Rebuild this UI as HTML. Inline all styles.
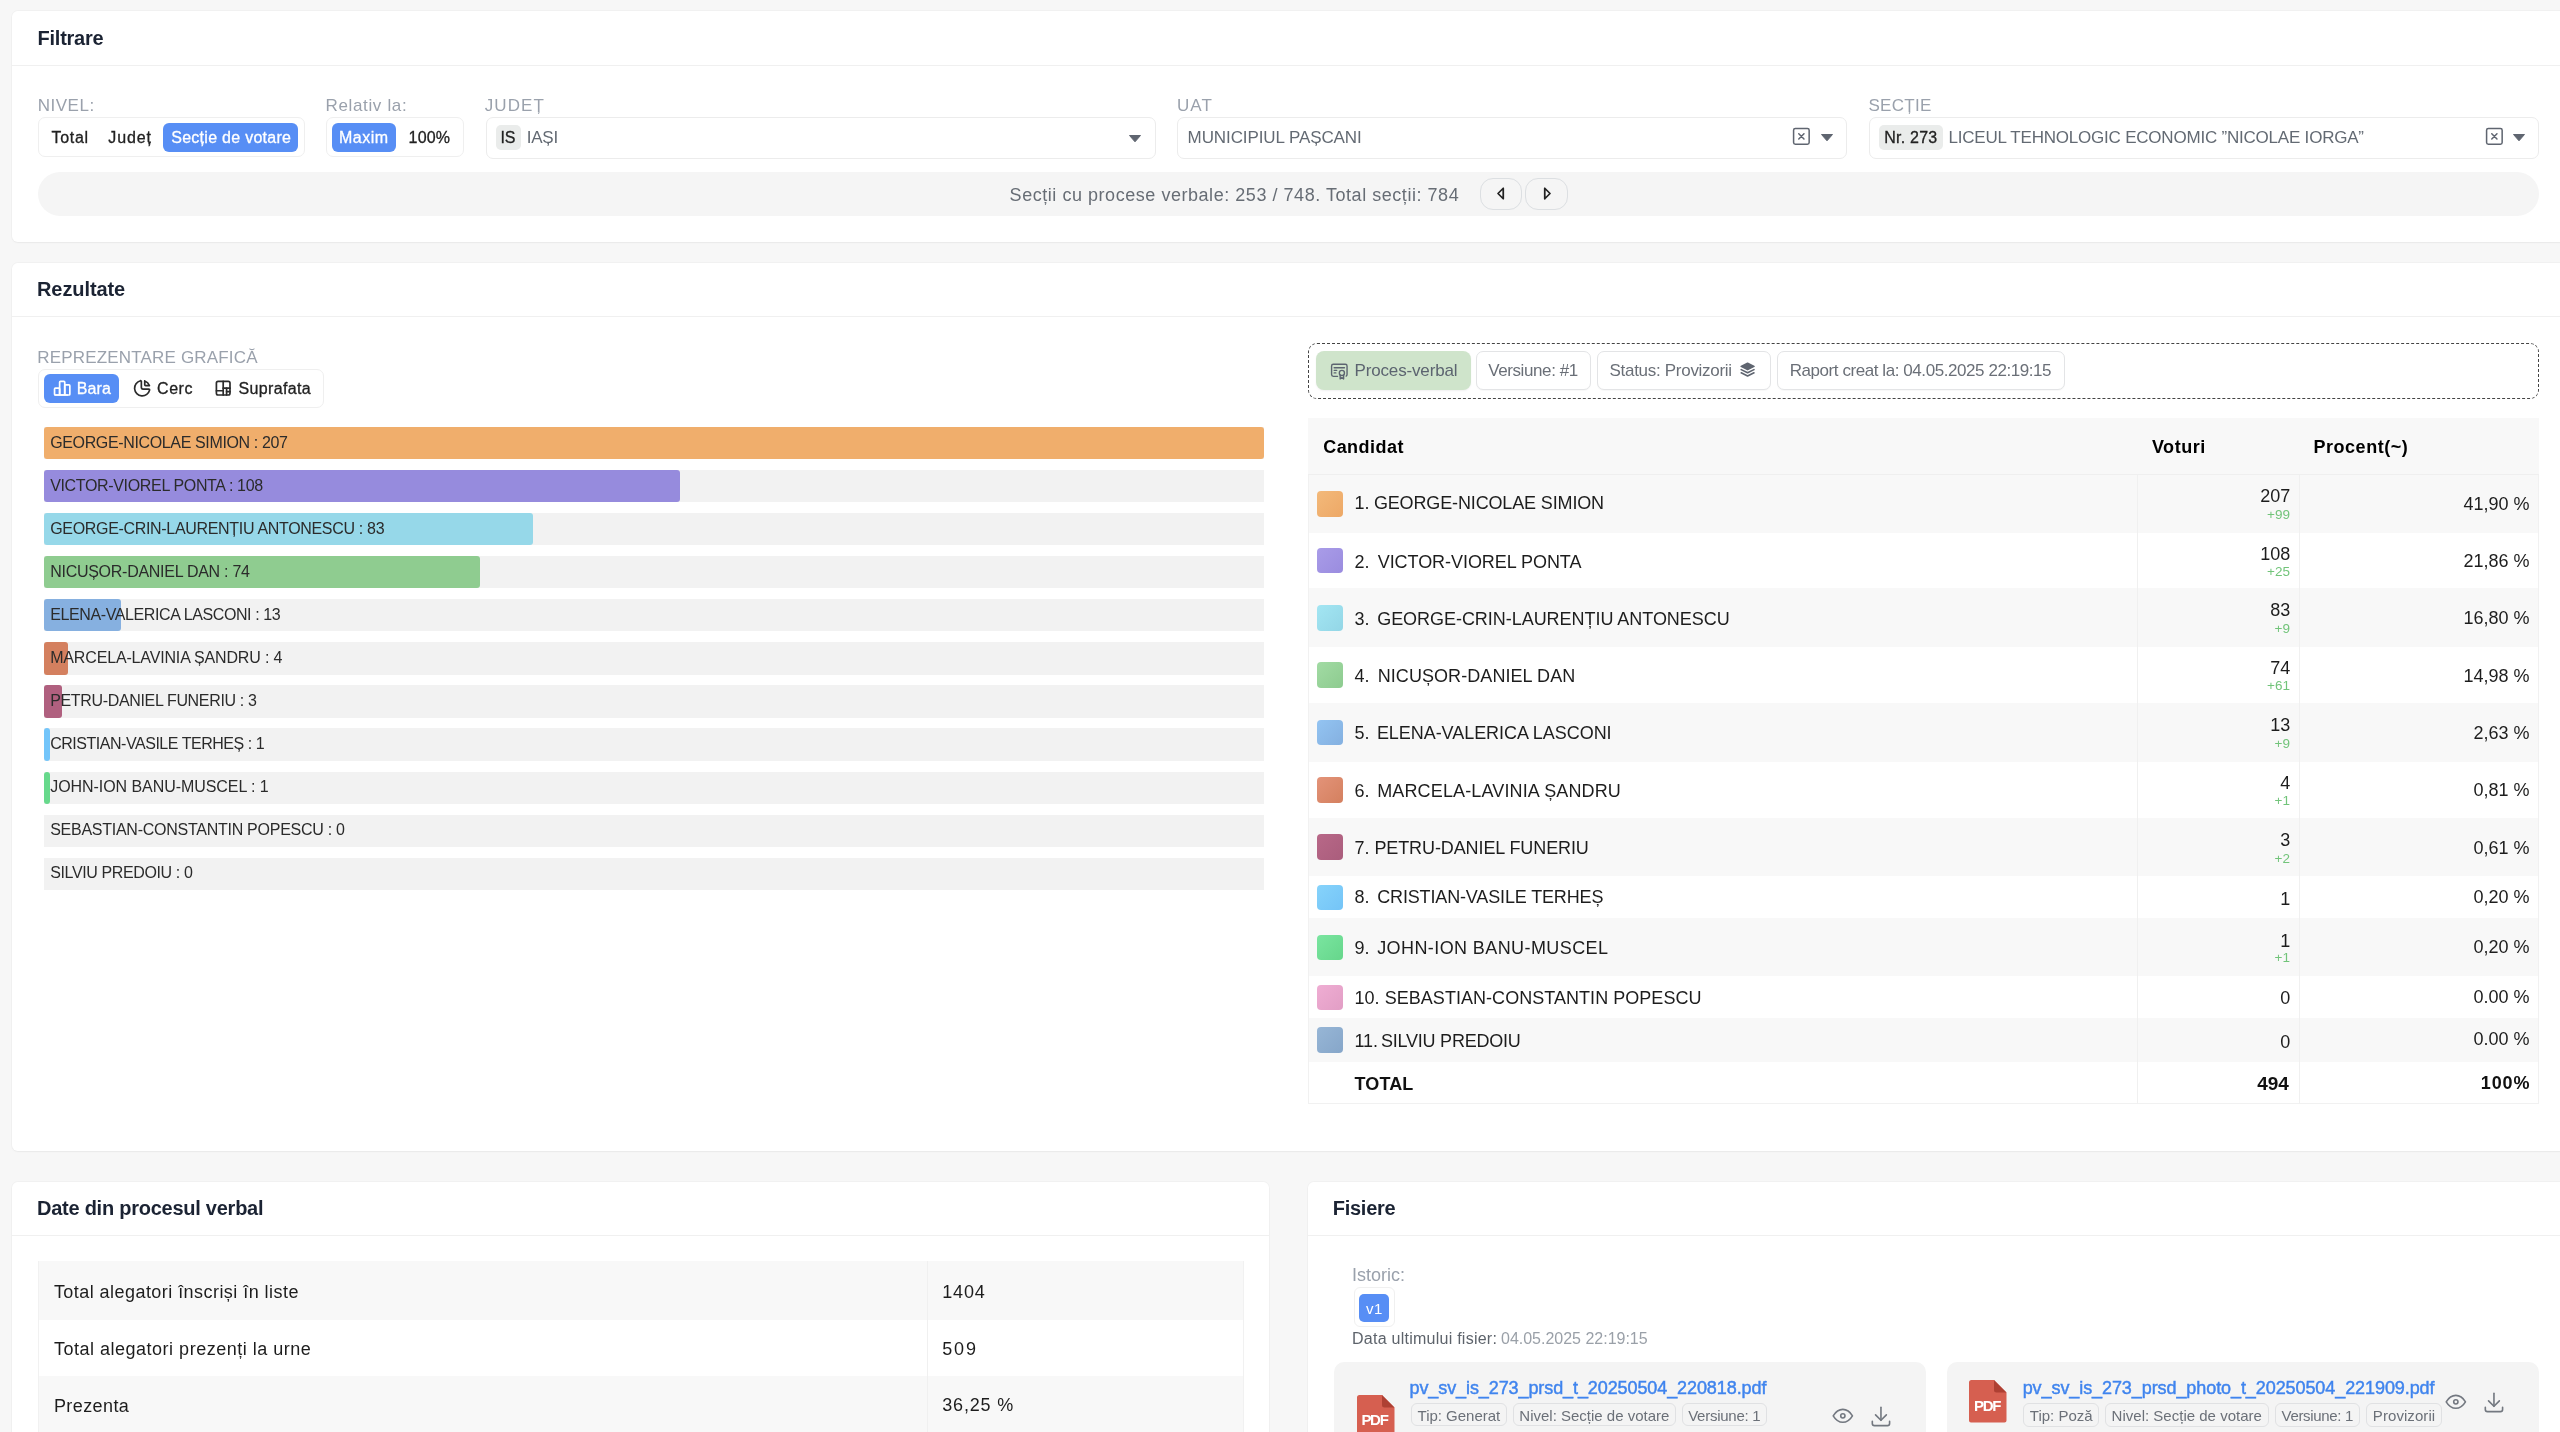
<!DOCTYPE html>
<html><head><meta charset="utf-8"><title>Rezultate</title>
<style>
html,body{margin:0;padding:0;}
body{width:2560px;height:1432px;overflow:hidden;position:relative;background:#f7f7f7;font-family:'Liberation Sans', sans-serif;}
.t{position:absolute;white-space:pre;line-height:1;-webkit-font-smoothing:antialiased;}
.r{position:absolute;box-sizing:border-box;}
svg{position:absolute;overflow:visible;}

.card{position:absolute;background:#fff;border-radius:6px;box-shadow:0 0 0 1px rgba(0,0,0,0.025),0 1px 2px rgba(0,0,0,0.04);}
.hl{position:absolute;height:1px;background:#f0f0f0;}
.seg{border:1px solid #efefef;border-radius:7px;background:#fff;}
.btn{background:#578ef5;border-radius:6px;}
.sel{border:1px solid #ececec;border-radius:7px;background:#fff;}
.gtag{background:#eaeceb;border-radius:5px;}
.tag{border:1px solid #e3e4e6;border-radius:7px;background:#fff;box-shadow:0 1px 1px rgba(0,0,0,0.03);}
.ftag{border:1px solid #e0e1e3;border-radius:6px;}
.track{background:#f2f2f2;}
.fill{border-radius:3px;}
.sw{border-radius:4px;}

</style></head><body><div id="wrap" style="position:absolute;left:0;top:0;width:2560px;height:1432px;will-change:transform">
<div class="card" style="left:12px;top:10.5px;width:2600px;height:231.5px"></div>
<div class="hl" style="left:12px;top:65px;width:2548px"></div>
<div class="t" style="left:37.5px;top:27.9px;font-size:20px;color:#1b2333;font-weight:700;letter-spacing:-0.23px;">Filtrare</div>
<div class="t" style="left:37.7px;top:96.6px;font-size:17px;color:#9aa1ac;letter-spacing:0.53px;">NIVEL:</div>
<div class="r seg" style="left:38px;top:117.3px;width:266.5px;height:40px"></div>
<div class="r btn" style="left:163.2px;top:123.4px;width:135.3px;height:28.4px"></div>
<div class="t" style="left:51.4px;top:129.9px;font-size:16px;color:#222;letter-spacing:0.74px;-webkit-text-stroke:0.3px currentColor;">Total</div>
<div class="t" style="left:108.3px;top:129.9px;font-size:16px;color:#222;letter-spacing:0.90px;-webkit-text-stroke:0.3px currentColor;">Județ</div>
<div class="t" style="left:171.2px;top:129.9px;font-size:16px;color:#fff;letter-spacing:0.28px;-webkit-text-stroke:0.3px currentColor;">Secție de votare</div>
<div class="t" style="left:325.5px;top:96.6px;font-size:17px;color:#9aa1ac;letter-spacing:0.65px;">Relativ la:</div>
<div class="r seg" style="left:325.6px;top:117.3px;width:138.7px;height:40px"></div>
<div class="r btn" style="left:331.6px;top:123.4px;width:64.9px;height:28.4px"></div>
<div class="t" style="left:339.0px;top:129.9px;font-size:16px;color:#fff;letter-spacing:0.51px;-webkit-text-stroke:0.3px currentColor;">Maxim</div>
<div class="t" style="left:408.6px;top:129.9px;font-size:16px;color:#222;letter-spacing:0.18px;-webkit-text-stroke:0.3px currentColor;">100%</div>
<div class="t" style="left:484.8px;top:96.6px;font-size:17px;color:#9aa1ac;letter-spacing:1.07px;">JUDEȚ</div>
<div class="r sel" style="left:485.6px;top:117.3px;width:670px;height:41.4px"></div>
<div class="r gtag" style="left:496px;top:125.2px;width:25.2px;height:24.4px"></div>
<div class="t" style="left:500.5px;top:129.9px;font-size:16px;color:#222;letter-spacing:-0.26px;-webkit-text-stroke:0.3px currentColor;">IS</div>
<div class="t" style="left:526.7px;top:129.1px;font-size:17px;color:#636a73;letter-spacing:-0.22px;">IAȘI</div>
<svg style="left:1128.7px;top:134.6px" width="12" height="7"><path d="M0.5 0.5 L11.5 0.5 L6 6.8 Z" fill="#5f6570" stroke="#5f6570" stroke-width="1" stroke-linejoin="round"/></svg>
<div class="t" style="left:1176.9px;top:96.6px;font-size:17px;color:#9aa1ac;letter-spacing:1.11px;">UAT</div>
<div class="r sel" style="left:1177.1px;top:117.3px;width:670.4px;height:41.4px"></div>
<div class="t" style="left:1187.6px;top:129.1px;font-size:17px;color:#636a73;letter-spacing:-0.09px;">MUNICIPIUL PAȘCANI</div>
<svg style="left:1791.27px;top:126.47px" width="20.76" height="20.76" viewBox="0 0 24 24" fill="none" stroke="#5f6570" stroke-width="1.75" stroke-linecap="round" stroke-linejoin="round"><path d="M3 5a2 2 0 0 1 2 -2h14a2 2 0 0 1 2 2v14a2 2 0 0 1 -2 2h-14a2 2 0 0 1 -2 -2z"/><path d="M9 9l6 6m0 -6l-6 6"/></svg>
<svg style="left:1820.7px;top:133.9px" width="12" height="7"><path d="M0.5 0.5 L11.5 0.5 L6 6.8 Z" fill="#5f6570" stroke="#5f6570" stroke-width="1" stroke-linejoin="round"/></svg>
<div class="t" style="left:1868.5px;top:96.6px;font-size:17px;color:#9aa1ac;letter-spacing:0.27px;">SECȚIE</div>
<div class="r sel" style="left:1869.1px;top:117.3px;width:669.6px;height:41.4px"></div>
<div class="r gtag" style="left:1879.3px;top:125.2px;width:63.7px;height:24.4px"></div>
<div class="t" style="left:1884.2px;top:130.2px;font-size:16px;color:#222;letter-spacing:0.23px;-webkit-text-stroke:0.3px currentColor;">Nr. 273</div>
<div class="t" style="left:1948.5px;top:129.4px;font-size:17px;color:#636a73;letter-spacing:-0.21px;">LICEUL TEHNOLOGIC ECONOMIC ”NICOLAE IORGA”</div>
<svg style="left:2483.57px;top:126.47px" width="20.76" height="20.76" viewBox="0 0 24 24" fill="none" stroke="#5f6570" stroke-width="1.75" stroke-linecap="round" stroke-linejoin="round"><path d="M3 5a2 2 0 0 1 2 -2h14a2 2 0 0 1 2 2v14a2 2 0 0 1 -2 2h-14a2 2 0 0 1 -2 -2z"/><path d="M9 9l6 6m0 -6l-6 6"/></svg>
<svg style="left:2512.5px;top:133.9px" width="12" height="7"><path d="M0.5 0.5 L11.5 0.5 L6 6.8 Z" fill="#5f6570" stroke="#5f6570" stroke-width="1" stroke-linejoin="round"/></svg>
<div class="r" style="left:38px;top:171.5px;width:2500.7px;height:44.7px;background:#f5f5f5;border-radius:22px"></div>
<div class="t" style="left:1009.6px;top:185.5px;font-size:18px;color:#676d75;letter-spacing:0.54px;">Secții cu procese verbale: 253 / 748. Total secții: 784</div>
<div class="r" style="left:1480.3px;top:178px;width:42.2px;height:31.7px;border:1px solid #dcdfe2;border-radius:13px"></div>
<div class="r" style="left:1525.2px;top:178px;width:42.4px;height:31.7px;border:1px solid #dcdfe2;border-radius:13px"></div>
<svg style="left:1490.60px;top:183.00px" width="21.00" height="21.00" viewBox="0 0 24 24" fill="none" stroke="#222" stroke-width="2" stroke-linecap="round" stroke-linejoin="round"><path d="M14 6l-6 6l6 6v-12"/></svg>
<svg style="left:1535.90px;top:183.00px" width="21.00" height="21.00" viewBox="0 0 24 24" fill="none" stroke="#222" stroke-width="2" stroke-linecap="round" stroke-linejoin="round"><path d="M10 18l6 -6l-6 -6v12"/></svg>
<div class="card" style="left:12px;top:263px;width:2600px;height:888px"></div>
<div class="hl" style="left:12px;top:316px;width:2548px"></div>
<div class="t" style="left:37.0px;top:279.2px;font-size:20px;color:#1b2333;font-weight:700;letter-spacing:-0.09px;">Rezultate</div>
<div class="t" style="left:37.2px;top:348.6px;font-size:17px;color:#9aa1ac;letter-spacing:0.18px;">REPREZENTARE GRAFICĂ</div>
<div class="r seg" style="left:38px;top:368.75px;width:286.25px;height:39.25px"></div>
<div class="r btn" style="left:44px;top:374.25px;width:74.5px;height:28.25px"></div>
<svg style="left:51.70px;top:378.00px" width="20.40" height="20.40" viewBox="0 0 24 24" fill="none" stroke="#fff" stroke-width="2" stroke-linecap="round" stroke-linejoin="round"><path d="M3 13a1 1 0 0 1 1 -1h4a1 1 0 0 1 1 1v6a1 1 0 0 1 -1 1h-4a1 1 0 0 1 -1 -1z"/><path d="M15 9a1 1 0 0 1 1 -1h4a1 1 0 0 1 1 1v10a1 1 0 0 1 -1 1h-4a1 1 0 0 1 -1 -1z"/><path d="M9 5a1 1 0 0 1 1 -1h4a1 1 0 0 1 1 1v14a1 1 0 0 1 -1 1h-4a1 1 0 0 1 -1 -1z"/><path d="M4 20h14"/></svg>
<div class="t" style="left:76.8px;top:380.6px;font-size:16px;color:#fff;letter-spacing:0.07px;-webkit-text-stroke:0.3px currentColor;">Bara</div>
<svg style="left:132.00px;top:377.60px" width="20.40" height="20.40" viewBox="0 0 24 24" fill="none" stroke="#2b2b2b" stroke-width="2" stroke-linecap="round" stroke-linejoin="round"><path d="M10 3.2a9 9 0 1 0 10.8 10.8a1 1 0 0 0 -1 -1h-6.8a2 2 0 0 1 -2 -2v-7a.9 .9 0 0 0 -1 -.8"/><path d="M15 3.5a9 9 0 0 1 5.5 5.5h-4.5a1 1 0 0 1 -1 -1v-4.5"/></svg>
<div class="t" style="left:157.0px;top:380.6px;font-size:16px;color:#222;letter-spacing:0.58px;-webkit-text-stroke:0.3px currentColor;">Cerc</div>
<svg style="left:213.00px;top:378.00px" width="20.40" height="20.40" viewBox="0 0 24 24" fill="none" stroke="#2b2b2b" stroke-width="2" stroke-linecap="round" stroke-linejoin="round"><path d="M4 6a2 2 0 0 1 2 -2h12a2 2 0 0 1 2 2v12a2 2 0 0 1 -2 2h-12a2 2 0 0 1 -2 -2z"/><path d="M12 4v16"/><path d="M4 15h8"/><path d="M12 12h8"/><path d="M16 12v8"/><path d="M16 16h4"/></svg>
<div class="t" style="left:238.5px;top:380.6px;font-size:16px;color:#222;letter-spacing:0.36px;-webkit-text-stroke:0.3px currentColor;">Suprafata</div>
<div class="r track" style="left:44px;top:427.00px;width:1219.7px;height:32.2px"></div>
<div class="r fill" style="left:44px;top:427.00px;width:1219.7px;height:32.2px;background:#f0ae6c"></div>
<div class="t" style="left:50.2px;top:434.5px;font-size:16px;color:#2b2b2b;letter-spacing:-0.36px;">GEORGE-NICOLAE SIMION : 207</div>
<div class="r track" style="left:44px;top:470.07px;width:1219.7px;height:32.2px"></div>
<div class="r fill" style="left:44px;top:470.07px;width:636.4px;height:32.2px;background:#968bdd"></div>
<div class="t" style="left:50.2px;top:477.6px;font-size:16px;color:#2b2b2b;letter-spacing:-0.34px;">VICTOR-VIOREL PONTA : 108</div>
<div class="r track" style="left:44px;top:513.14px;width:1219.7px;height:32.2px"></div>
<div class="r fill" style="left:44px;top:513.14px;width:489.1px;height:32.2px;background:#96d8e9"></div>
<div class="t" style="left:50.2px;top:520.6px;font-size:16px;color:#2b2b2b;letter-spacing:-0.32px;">GEORGE-CRIN-LAURENȚIU ANTONESCU : 83</div>
<div class="r track" style="left:44px;top:556.21px;width:1219.7px;height:32.2px"></div>
<div class="r fill" style="left:44px;top:556.21px;width:436.0px;height:32.2px;background:#8fcc90"></div>
<div class="t" style="left:50.2px;top:563.7px;font-size:16px;color:#2b2b2b;letter-spacing:-0.27px;">NICUȘOR-DANIEL DAN : 74</div>
<div class="r track" style="left:44px;top:599.28px;width:1219.7px;height:32.2px"></div>
<div class="r fill" style="left:44px;top:599.28px;width:76.6px;height:32.2px;background:#86b0e0"></div>
<div class="t" style="left:50.2px;top:606.8px;font-size:16px;color:#2b2b2b;letter-spacing:-0.39px;">ELENA-VALERICA LASCONI : 13</div>
<div class="r track" style="left:44px;top:642.35px;width:1219.7px;height:32.2px"></div>
<div class="r fill" style="left:44px;top:642.35px;width:23.6px;height:32.2px;background:#d4805f"></div>
<div class="t" style="left:50.2px;top:649.9px;font-size:16px;color:#2b2b2b;letter-spacing:-0.16px;">MARCELA-LAVINIA ȘANDRU : 4</div>
<div class="r track" style="left:44px;top:685.42px;width:1219.7px;height:32.2px"></div>
<div class="r fill" style="left:44px;top:685.42px;width:17.7px;height:32.2px;background:#b0607f"></div>
<div class="t" style="left:50.2px;top:692.9px;font-size:16px;color:#2b2b2b;letter-spacing:-0.34px;">PETRU-DANIEL FUNERIU : 3</div>
<div class="r track" style="left:44px;top:728.49px;width:1219.7px;height:32.2px"></div>
<div class="r fill" style="left:44px;top:728.49px;width:5.9px;height:32.2px;background:#73c5fa"></div>
<div class="t" style="left:50.2px;top:736.0px;font-size:16px;color:#2b2b2b;letter-spacing:-0.47px;">CRISTIAN-VASILE TERHEȘ : 1</div>
<div class="r track" style="left:44px;top:771.56px;width:1219.7px;height:32.2px"></div>
<div class="r fill" style="left:44px;top:771.56px;width:5.9px;height:32.2px;background:#67d98c"></div>
<div class="t" style="left:50.2px;top:779.1px;font-size:16px;color:#2b2b2b;letter-spacing:-0.06px;">JOHN-ION BANU-MUSCEL : 1</div>
<div class="r track" style="left:44px;top:814.63px;width:1219.7px;height:32.2px"></div>
<div class="t" style="left:50.2px;top:822.1px;font-size:16px;color:#2b2b2b;letter-spacing:-0.26px;">SEBASTIAN-CONSTANTIN POPESCU : 0</div>
<div class="r track" style="left:44px;top:857.70px;width:1219.7px;height:32.2px"></div>
<div class="t" style="left:50.2px;top:865.2px;font-size:16px;color:#2b2b2b;letter-spacing:-0.38px;">SILVIU PREDOIU : 0</div>
<div class="r" style="left:1308px;top:342.5px;width:1231.3px;height:56.3px;border:1px dashed #444;border-radius:9px"></div>
<div class="r" style="left:1316.25px;top:351.25px;width:154.25px;height:38.25px;background:#cfe4cb;border-radius:8px;box-shadow:0 1px 2px rgba(0,0,0,0.06)"></div>
<svg style="left:1328.50px;top:359.90px" width="20.64" height="20.64" viewBox="0 0 24 24" fill="none" stroke="#5c6470" stroke-width="1.6" stroke-linecap="round" stroke-linejoin="round"><path d="M15 15m-3 0a3 3 0 1 0 6 0a3 3 0 1 0 -6 0"/><path d="M13 17.5v4.5l2 -1.5l2 1.5v-4.5"/><path d="M10 19h-5a2 2 0 0 1 -2 -2v-10c0 -1.1 .9 -2 2 -2h14a2 2 0 0 1 2 2v10a2 2 0 0 1 -1 1.73"/><path d="M6 9l12 0"/><path d="M6 12l3 0"/><path d="M6 15l2 0"/></svg>
<div class="t" style="left:1354.5px;top:362.3px;font-size:17px;color:#5c6470;letter-spacing:-0.15px;">Proces-verbal</div>
<div class="r tag" style="left:1475.75px;top:351.25px;width:114.75px;height:38.25px"></div>
<div class="t" style="left:1488.2px;top:362.3px;font-size:17px;color:#6a6f77;letter-spacing:-0.40px;">Versiune: #1</div>
<div class="r tag" style="left:1596.75px;top:351.25px;width:173.75px;height:38.25px"></div>
<div class="t" style="left:1609.5px;top:362.3px;font-size:17px;color:#6a6f77;letter-spacing:-0.29px;">Status: Provizorii</div>
<svg style="left:1737.60px;top:359.60px" width="19.20" height="19.20" viewBox="0 0 24 24" fill="#5f6570" stroke="#5f6570" stroke-width="2" stroke-linecap="round" stroke-linejoin="round"><path d="M12 4l-8 4l8 4l8 -4l-8 -4z"/></svg>
<svg style="left:1737.60px;top:359.60px" width="19.20" height="19.20" viewBox="0 0 24 24" fill="none" stroke="#5f6570" stroke-width="2" stroke-linecap="round" stroke-linejoin="round"><path d="M4 12l8 4l8 -4"/><path d="M4 16l8 4l8 -4"/></svg>
<div class="r tag" style="left:1776.75px;top:351.25px;width:287.75px;height:38.25px"></div>
<div class="t" style="left:1789.7px;top:362.3px;font-size:17px;color:#6a6f77;letter-spacing:-0.43px;">Raport creat la: 04.05.2025 22:19:15</div>
<div class="r" style="left:1308.25px;top:418px;width:1230.75px;height:686.25px;border:1px solid #f1f1f1;border-top:none;background:#fff"></div>
<div class="r" style="left:1308.25px;top:418px;width:1230.75px;height:56.5px;background:#f8f8f8;border-bottom:1px solid #efefef"></div>
<div class="t" style="left:1323.2px;top:437.7px;font-size:18px;color:#000;font-weight:700;letter-spacing:0.46px;">Candidat</div>
<div class="t" style="left:2151.9px;top:437.7px;font-size:18px;color:#000;font-weight:700;letter-spacing:0.56px;">Voturi</div>
<div class="t" style="left:2313.4px;top:437.7px;font-size:18px;color:#000;font-weight:700;letter-spacing:0.55px;">Procent(~)</div>
<div class="r" style="left:1309.25px;top:474.50px;width:1228.75px;height:58.00px;background:#f8f8f8"></div>
<div class="r sw" style="left:1317px;top:491.0px;width:25.5px;height:25.5px;background:linear-gradient(135deg,#f3b97a 0%,#eda866 100%)"></div>
<div class="t" style="left:1354.4px;top:494.4px;font-size:18px;color:#1d1d1d;">1.</div>
<div class="t" style="left:1373.9px;top:494.4px;font-size:18px;color:#1d1d1d;letter-spacing:-0.14px;">GEORGE-NICOLAE SIMION</div>
<div class="t" style="right:269.8px;top:487.2px;font-size:18px;color:#1d1d1d;">207</div>
<div class="t" style="right:270.0px;top:507.8px;font-size:13.5px;color:#72c47a;">+99</div>
<div class="t" style="right:30.5px;top:494.7px;font-size:18px;color:#1d1d1d;">41,90 %</div>
<div class="r" style="left:1309.25px;top:532.50px;width:1228.75px;height:55.75px;background:#fff"></div>
<div class="r sw" style="left:1317px;top:547.9px;width:25.5px;height:25.5px;background:linear-gradient(135deg,#a99ce8 0%,#9a8cdf 100%)"></div>
<div class="t" style="left:1354.4px;top:552.7px;font-size:18px;color:#1d1d1d;">2.</div>
<div class="t" style="left:1377.7px;top:552.7px;font-size:18px;color:#1d1d1d;letter-spacing:-0.05px;">VICTOR-VIOREL PONTA</div>
<div class="t" style="right:269.8px;top:544.5px;font-size:18px;color:#1d1d1d;">108</div>
<div class="t" style="right:270.0px;top:564.7px;font-size:13.5px;color:#72c47a;">+25</div>
<div class="t" style="right:30.5px;top:551.9px;font-size:18px;color:#1d1d1d;">21,86 %</div>
<div class="r" style="left:1309.25px;top:588.25px;width:1228.75px;height:58.50px;background:#f8f8f8"></div>
<div class="r sw" style="left:1317px;top:605.0px;width:25.5px;height:25.5px;background:linear-gradient(135deg,#a3e6f3 0%,#93d6e6 100%)"></div>
<div class="t" style="left:1354.4px;top:609.5px;font-size:18px;color:#1d1d1d;">3.</div>
<div class="t" style="left:1377.2px;top:609.5px;font-size:18px;color:#1d1d1d;letter-spacing:-0.04px;">GEORGE-CRIN-LAURENȚIU ANTONESCU</div>
<div class="t" style="right:269.8px;top:601.2px;font-size:18px;color:#1d1d1d;">83</div>
<div class="t" style="right:270.0px;top:622.0px;font-size:13.5px;color:#72c47a;">+9</div>
<div class="t" style="right:30.5px;top:608.8px;font-size:18px;color:#1d1d1d;">16,80 %</div>
<div class="r" style="left:1309.25px;top:646.75px;width:1228.75px;height:55.75px;background:#fff"></div>
<div class="r sw" style="left:1317px;top:662.1px;width:25.5px;height:25.5px;background:linear-gradient(135deg,#a2dba4 0%,#8dcb8f 100%)"></div>
<div class="t" style="left:1354.4px;top:667.0px;font-size:18px;color:#1d1d1d;">4.</div>
<div class="t" style="left:1377.7px;top:667.0px;font-size:18px;color:#1d1d1d;letter-spacing:0.07px;">NICUȘOR-DANIEL DAN</div>
<div class="t" style="right:269.8px;top:658.9px;font-size:18px;color:#1d1d1d;">74</div>
<div class="t" style="right:270.0px;top:679.0px;font-size:13.5px;color:#72c47a;">+61</div>
<div class="t" style="right:30.5px;top:666.8px;font-size:18px;color:#1d1d1d;">14,98 %</div>
<div class="r" style="left:1309.25px;top:702.50px;width:1228.75px;height:59.25px;background:#f8f8f8"></div>
<div class="r sw" style="left:1317px;top:719.6px;width:25.5px;height:25.5px;background:linear-gradient(135deg,#93c4f2 0%,#84b0e0 100%)"></div>
<div class="t" style="left:1354.4px;top:724.0px;font-size:18px;color:#1d1d1d;">5.</div>
<div class="t" style="left:1376.9px;top:724.0px;font-size:18px;color:#1d1d1d;letter-spacing:-0.05px;">ELENA-VALERICA LASCONI</div>
<div class="t" style="right:269.8px;top:716.2px;font-size:18px;color:#1d1d1d;">13</div>
<div class="t" style="right:270.0px;top:736.6px;font-size:13.5px;color:#72c47a;">+9</div>
<div class="t" style="right:30.5px;top:724.2px;font-size:18px;color:#1d1d1d;">2,63 %</div>
<div class="r" style="left:1309.25px;top:761.75px;width:1228.75px;height:55.75px;background:#fff"></div>
<div class="r sw" style="left:1317px;top:777.1px;width:25.5px;height:25.5px;background:linear-gradient(135deg,#e39379 0%,#d4805f 100%)"></div>
<div class="t" style="left:1354.4px;top:781.5px;font-size:18px;color:#1d1d1d;">6.</div>
<div class="t" style="left:1377.2px;top:781.5px;font-size:18px;color:#1d1d1d;letter-spacing:0.14px;">MARCELA-LAVINIA ȘANDRU</div>
<div class="t" style="right:269.8px;top:773.9px;font-size:18px;color:#1d1d1d;">4</div>
<div class="t" style="right:270.0px;top:793.6px;font-size:13.5px;color:#72c47a;">+1</div>
<div class="t" style="right:30.5px;top:781.2px;font-size:18px;color:#1d1d1d;">0,81 %</div>
<div class="r" style="left:1309.25px;top:817.50px;width:1228.75px;height:58.75px;background:#f8f8f8"></div>
<div class="r sw" style="left:1317px;top:834.4px;width:25.5px;height:25.5px;background:linear-gradient(135deg,#b86888 0%,#aa5d7c 100%)"></div>
<div class="t" style="left:1354.4px;top:839.0px;font-size:18px;color:#1d1d1d;">7.</div>
<div class="t" style="left:1374.4px;top:839.0px;font-size:18px;color:#1d1d1d;letter-spacing:-0.10px;">PETRU-DANIEL FUNERIU</div>
<div class="t" style="right:269.8px;top:831.2px;font-size:18px;color:#1d1d1d;">3</div>
<div class="t" style="right:270.0px;top:851.5px;font-size:13.5px;color:#72c47a;">+2</div>
<div class="t" style="right:30.5px;top:839.2px;font-size:18px;color:#1d1d1d;">0,61 %</div>
<div class="r" style="left:1309.25px;top:876.25px;width:1228.75px;height:41.75px;background:#fff"></div>
<div class="r sw" style="left:1317px;top:884.6px;width:25.5px;height:25.5px;background:linear-gradient(135deg,#86d3fb 0%,#74c4f7 100%)"></div>
<div class="t" style="left:1354.4px;top:888.2px;font-size:18px;color:#1d1d1d;">8.</div>
<div class="t" style="left:1377.2px;top:888.2px;font-size:18px;color:#1d1d1d;letter-spacing:-0.15px;">CRISTIAN-VASILE TERHEȘ</div>
<div class="t" style="right:269.8px;top:890.0px;font-size:18px;color:#1d1d1d;">1</div>
<div class="t" style="right:30.5px;top:887.6px;font-size:18px;color:#1d1d1d;">0,20 %</div>
<div class="r" style="left:1309.25px;top:918.00px;width:1228.75px;height:58.25px;background:#f8f8f8"></div>
<div class="r sw" style="left:1317px;top:934.6px;width:25.5px;height:25.5px;background:linear-gradient(135deg,#7ae5a0 0%,#66d68b 100%)"></div>
<div class="t" style="left:1354.4px;top:938.5px;font-size:18px;color:#1d1d1d;">9.</div>
<div class="t" style="left:1377.2px;top:938.5px;font-size:18px;color:#1d1d1d;letter-spacing:0.41px;">JOHN-ION BANU-MUSCEL</div>
<div class="t" style="right:269.8px;top:931.6px;font-size:18px;color:#1d1d1d;">1</div>
<div class="t" style="right:270.0px;top:951.2px;font-size:13.5px;color:#72c47a;">+1</div>
<div class="t" style="right:30.5px;top:938.2px;font-size:18px;color:#1d1d1d;">0,20 %</div>
<div class="r" style="left:1309.25px;top:976.25px;width:1228.75px;height:41.75px;background:#fff"></div>
<div class="r sw" style="left:1317px;top:984.6px;width:25.5px;height:25.5px;background:linear-gradient(135deg,#efadd3 0%,#e29ec5 100%)"></div>
<div class="t" style="left:1354.4px;top:989.0px;font-size:18px;color:#1d1d1d;">10.</div>
<div class="t" style="left:1384.7px;top:989.0px;font-size:18px;color:#1d1d1d;letter-spacing:0.04px;">SEBASTIAN-CONSTANTIN POPESCU</div>
<div class="t" style="right:269.8px;top:989.2px;font-size:18px;color:#1d1d1d;">0</div>
<div class="t" style="right:30.5px;top:987.9px;font-size:18px;color:#1d1d1d;">0.00 %</div>
<div class="r" style="left:1309.25px;top:1018.00px;width:1228.75px;height:43.75px;background:#f8f8f8"></div>
<div class="r sw" style="left:1317px;top:1027.4px;width:25.5px;height:25.5px;background:linear-gradient(135deg,#97b6d6 0%,#86a6c9 100%)"></div>
<div class="t" style="left:1354.4px;top:1031.5px;font-size:18px;color:#1d1d1d;">11.</div>
<div class="t" style="left:1380.9px;top:1031.5px;font-size:18px;color:#1d1d1d;letter-spacing:-0.21px;">SILVIU PREDOIU</div>
<div class="t" style="right:269.8px;top:1032.8px;font-size:18px;color:#1d1d1d;">0</div>
<div class="t" style="right:30.5px;top:1030.4px;font-size:18px;color:#1d1d1d;">0.00 %</div>
<div class="t" style="left:1354.4px;top:1074.5px;font-size:18px;color:#111;font-weight:700;letter-spacing:0.16px;">TOTAL</div>
<div class="t" style="right:271.1px;top:1074.1px;font-size:19px;color:#111;font-weight:700;">494</div>
<div class="t" style="right:29.6px;top:1074.0px;font-size:18px;color:#111;font-weight:700;letter-spacing:0.91px;">100%</div>
<div class="r" style="left:2136.5px;top:474.5px;width:1px;height:629.75px;background:#f0f0f0"></div>
<div class="r" style="left:2298.5px;top:474.5px;width:1px;height:629.75px;background:#f0f0f0"></div>
<div class="card" style="left:12px;top:1182px;width:1257px;height:400px"></div>
<div class="hl" style="left:12px;top:1235.3px;width:1257px"></div>
<div class="t" style="left:37.0px;top:1198.0px;font-size:20px;color:#1b2333;font-weight:700;letter-spacing:-0.25px;">Date din procesul verbal</div>
<div class="r" style="left:37.5px;top:1261px;width:1206.2px;height:200px;border:1px solid #f1f1f1"></div>
<div class="r" style="left:38.5px;top:1261.00px;width:1204.2px;height:58.75px;background:#f8f8f8"></div>
<div class="t" style="left:53.9px;top:1283.2px;font-size:18px;color:#1d1d1d;letter-spacing:0.45px;">Total alegatori înscriși în liste</div>
<div class="t" style="left:942.2px;top:1283.2px;font-size:18px;color:#1d1d1d;letter-spacing:0.88px;">1404</div>
<div class="r" style="left:38.5px;top:1319.75px;width:1204.2px;height:56.25px;background:#fff"></div>
<div class="t" style="left:53.9px;top:1340.2px;font-size:18px;color:#1d1d1d;letter-spacing:0.51px;">Total alegatori prezenți la urne</div>
<div class="t" style="left:942.2px;top:1339.8px;font-size:18px;color:#1d1d1d;letter-spacing:1.92px;">509</div>
<div class="r" style="left:38.5px;top:1376.00px;width:1204.2px;height:56.50px;background:#f8f8f8"></div>
<div class="t" style="left:53.9px;top:1396.5px;font-size:18px;color:#1d1d1d;letter-spacing:0.42px;">Prezenta</div>
<div class="t" style="left:942.2px;top:1396.2px;font-size:18px;color:#1d1d1d;letter-spacing:0.84px;">36,25 %</div>
<div class="r" style="left:927px;top:1261px;width:1px;height:200px;background:#f0f0f0"></div>
<div class="card" style="left:1308px;top:1182px;width:1300px;height:400px"></div>
<div class="hl" style="left:1308px;top:1235.3px;width:1252px"></div>
<div class="t" style="left:1332.8px;top:1198.4px;font-size:20px;color:#1b2333;font-weight:700;letter-spacing:-0.28px;">Fisiere</div>
<div class="t" style="left:1351.9px;top:1266.2px;font-size:18px;color:#9aa1ac;">Istoric:</div>
<div class="r" style="left:1353.5px;top:1287.3px;width:41.1px;height:40.1px;border:1px solid #f0f0f0;border-radius:6px"></div>
<div class="r btn" style="left:1358.6px;top:1293.6px;width:30.9px;height:28.4px;border-radius:5px"></div>
<div class="t" style="left:1366.0px;top:1300.5px;font-size:15px;color:#fff;letter-spacing:0.41px;">v1</div>
<div class="t" style="left:1352.0px;top:1331.3px;font-size:16px;color:#5d636b;letter-spacing:0.25px;">Data ultimului fisier:</div>
<div class="t" style="left:1501.0px;top:1331.3px;font-size:16px;color:#9aa0a8;letter-spacing:-0.01px;">04.05.2025 22:19:15</div>
<div class="r" style="left:1334px;top:1362.2px;width:592.1px;height:120px;background:#f4f4f4;border-radius:10px"></div>
<svg style="left:1356.5px;top:1394.7px" width="37.5" height="42.5"><path d="M2.5 0 H25 L37.5 12.6 V40.5 A2 2 0 0 1 35.5 42.5 H2 A2 2 0 0 1 0 40.5 V2.5 A2.5 2.5 0 0 1 2.5 0 Z" fill="#d65f50"/><path d="M25 0 L37.5 12.6 H27.5 A2.5 2.5 0 0 1 25 10.1 Z" fill="#ae4033"/></svg>
<div class="t" style="left:1361.4px;top:1412.2px;font-size:15px;color:#fff;font-weight:700;letter-spacing:-1.28px;">PDF</div>
<div class="t" style="left:1409.5px;top:1379.2px;font-size:18px;color:#3f84ee;letter-spacing:-0.09px;-webkit-text-stroke:0.45px #3f84ee;">pv_sv_is_273_prsd_t_20250504_220818.pdf</div>
<div class="r ftag" style="left:1411.0px;top:1403.3px;width:96.0px;height:23.1px"></div>
<div class="t" style="left:1417.6px;top:1408.2px;font-size:15px;color:#6b7078;letter-spacing:-0.02px;">Tip: Generat</div>
<div class="r ftag" style="left:1512.7px;top:1403.3px;width:163.3px;height:23.1px"></div>
<div class="t" style="left:1519.3px;top:1408.2px;font-size:15px;color:#6b7078;">Nivel: Secție de votare</div>
<div class="r ftag" style="left:1681.6px;top:1403.3px;width:85.8px;height:23.1px"></div>
<div class="t" style="left:1688.2px;top:1408.2px;font-size:15px;color:#6b7078;letter-spacing:-0.26px;">Versiune: 1</div>
<svg style="left:1830.10px;top:1403.00px" width="25.68" height="25.68" viewBox="0 0 24 24" fill="none" stroke="#737880" stroke-width="1.5" stroke-linecap="round" stroke-linejoin="round"><path d="M10 12a2 2 0 1 0 4 0a2 2 0 0 0 -4 0"/><path d="M21 12c-2.4 4 -5.4 6 -9 6c-3.6 0 -6.6 -2 -9 -6c2.4 -4 5.4 -6 9 -6c3.6 0 6.6 2 9 6"/></svg>
<svg style="left:1868.40px;top:1403.10px" width="25.92" height="25.92" viewBox="0 0 24 24" fill="none" stroke="#737880" stroke-width="1.5" stroke-linecap="round" stroke-linejoin="round"><path d="M4 17v2a2 2 0 0 0 2 2h12a2 2 0 0 0 2 -2v-2"/><path d="M7 11l5 5l5 -5"/><path d="M12 4l0 12"/></svg>
<div class="r" style="left:1946.75px;top:1362px;width:592px;height:120px;background:#f4f4f4;border-radius:10px"></div>
<svg style="left:1969.2px;top:1380.0px" width="37.5" height="42.5"><path d="M2.5 0 H25 L37.5 12.6 V40.5 A2 2 0 0 1 35.5 42.5 H2 A2 2 0 0 1 0 40.5 V2.5 A2.5 2.5 0 0 1 2.5 0 Z" fill="#d65f50"/><path d="M25 0 L37.5 12.6 H27.5 A2.5 2.5 0 0 1 25 10.1 Z" fill="#ae4033"/></svg>
<div class="t" style="left:1974.1px;top:1397.5px;font-size:15px;color:#fff;font-weight:700;letter-spacing:-1.28px;">PDF</div>
<div class="t" style="left:2022.7px;top:1378.5px;font-size:18px;color:#3f84ee;letter-spacing:-0.08px;-webkit-text-stroke:0.45px #3f84ee;">pv_sv_is_273_prsd_photo_t_20250504_221909.pdf</div>
<div class="r ftag" style="left:2023.2px;top:1403.25px;width:76.2px;height:23.75px"></div>
<div class="t" style="left:2029.8px;top:1408.2px;font-size:15px;color:#6b7078;letter-spacing:0.01px;">Tip: Poză</div>
<div class="r ftag" style="left:2105.0px;top:1403.25px;width:163.8px;height:23.75px"></div>
<div class="t" style="left:2111.6px;top:1408.2px;font-size:15px;color:#6b7078;letter-spacing:0.01px;">Nivel: Secție de votare</div>
<div class="r ftag" style="left:2275.0px;top:1403.25px;width:85.0px;height:23.75px"></div>
<div class="t" style="left:2281.6px;top:1408.2px;font-size:15px;color:#6b7078;letter-spacing:-0.34px;">Versiune: 1</div>
<div class="r ftag" style="left:2366.2px;top:1403.25px;width:75.8px;height:23.75px"></div>
<div class="t" style="left:2372.8px;top:1408.2px;font-size:15px;color:#6b7078;letter-spacing:0.08px;">Provizorii</div>
<svg style="left:2442.60px;top:1388.50px" width="25.68" height="25.68" viewBox="0 0 24 24" fill="none" stroke="#737880" stroke-width="1.5" stroke-linecap="round" stroke-linejoin="round"><path d="M10 12a2 2 0 1 0 4 0a2 2 0 0 0 -4 0"/><path d="M21 12c-2.4 4 -5.4 6 -9 6c-3.6 0 -6.6 -2 -9 -6c2.4 -4 5.4 -6 9 -6c3.6 0 6.6 2 9 6"/></svg>
<svg style="left:2481.00px;top:1388.60px" width="25.92" height="25.92" viewBox="0 0 24 24" fill="none" stroke="#737880" stroke-width="1.5" stroke-linecap="round" stroke-linejoin="round"><path d="M4 17v2a2 2 0 0 0 2 2h12a2 2 0 0 0 2 -2v-2"/><path d="M7 11l5 5l5 -5"/><path d="M12 4l0 12"/></svg>
</div></body></html>
